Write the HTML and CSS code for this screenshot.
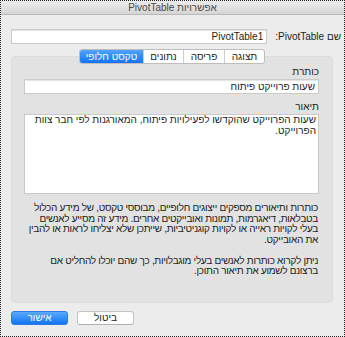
FILE: index.html
```html
<!DOCTYPE html>
<html dir="rtl" lang="he">
<head>
    <meta charset="utf-8">
    <title>אפשרויות PivotTable</title>
    <link rel="stylesheet" href="styles.css">
</head>
<body>
    <div class="window">
        <div class="titlebar">אפשרויות PivotTable</div>

        <div class="content">
            <div class="name-row">
                <label for="pivotName">שם PivotTable:</label>
                <input class="text-input" id="pivotName" value="PivotTable1">
            </div>

            <div class="tab-strip">
                <div class="tabs">
                    <div class="tab w40">תצוגה</div>
                    <div class="tab w41">פריסה</div>
                    <div class="tab w40">נתונים</div>
                    <div class="tab wide active">טקסט חלופי</div>
                </div>
            </div>

            <div class="panel">
                <div class="field-label">כותרת</div>
                <input class="text-input title-input" value="שעות פרוייקט פיתוח">

                <div class="field-label desc-label">תיאור</div>
                <textarea class="desc-box">שעות הפרוייקט שהוקדשו לפעילויות פיתוח, המאורגנות לפי חבר צוות הפרוייקט.</textarea>

                <div class="help">
                    <p>כותרות ותיאורים מספקים ייצוגים חלופיים, מבוססי טקסט, של מידע הכלול בטבלאות, דיאגרמות, תמונות ואובייקטים אחרים. מידע זה מסייע לאנשים בעלי לקויות ראייה או לקויות קוגניטיביות, שייתכן שלא יצליחו לראות או להבין את האובייקט.</p>
                    <p>ניתן לקרוא כותרות לאנשים בעלי מוגבלויות, כך שהם יוכלו להחליט אם ברצונם לשמוע את תיאור התוכן.</p>
                </div>
            </div>

            <div class="buttons">
                <button class="btn cancel">ביטול</button>
                <button class="btn primary">אישור</button>
            </div>
        </div>
    </div>
</body>
</html>
```

FILE: styles.css
```css
* {
    box-sizing: border-box;
}
body {
    margin: 0;
    font-family: "Liberation Sans", "DejaVu Sans", sans-serif;
    font-size: 10px;
    color: #1d1d1d;
}
.window {
    width: 345px;
    height: 337px;
    border: 1px dotted #222;
    background-color: #ececec;
    display: flex;
    flex-direction: column;
}
.titlebar {
    height: 14px;
    line-height: 13px;
    text-align: center;
    color: #4b4b4b;
    background: linear-gradient(#ebebeb, #d5d5d5);
    border-bottom: 1px solid #bababa;
}
.content {
    flex: 1;
    display: flex;
    flex-direction: column;
    padding: 14px 3px 0 10px;
}
.name-row {
    display: flex;
    align-items: center;
    gap: 8px;
    height: 15px;
}
.name-row label {
    white-space: nowrap;
}
.text-input {
    height: 15px;
    border: 1px solid #cacaca;
    background-color: #fff;
    font: inherit;
    color: #1d1d1d;
    padding: 0 3px;
    outline: none;
    box-shadow: inset 0 1px 0 #e4e4e4;
}
.name-row .text-input {
    flex: 1;
}
.tab-strip {
    display: flex;
    justify-content: center;
    margin: 5px 8px 0 0;
    position: relative;
    z-index: 1;
}
.tabs {
    display: flex;
    height: 15px;
    border: 1px solid #bdbdbd;
    border-radius: 3px;
    background-color: #fff;
    overflow: hidden;
}
.tab {
    line-height: 13px;
    text-align: center;
    border-left: 1px solid #cdcdcd;
}
.tab.w40 {
    width: 40px;
}
.tab.w41 {
    width: 41px;
}
.tab.wide {
    width: 63px;
    border-left: none;
}
.tab.active {
    background: linear-gradient(#4fa3fb, #1275f4);
    color: white;
}
.panel {
    margin: -8px 8px 0 0;
    height: 247px;
    padding: 9px 13px 0 12px;
    background-color: #e2e2e2;
    border: 1px solid #dcdcdc;
    border-radius: 4px;
}
.field-label {
    line-height: 12px;
}
.title-input {
    display: block;
    width: 100%;
    margin-top: 1px;
}
.desc-label {
    margin-top: 7px;
}
.desc-box {
    display: block;
    width: 100%;
    height: 80px;
    margin: 1px 0 0;
    padding: 0 2px;
    border: 1px solid #cacaca;
    background-color: #fff;
    font: inherit;
    line-height: 10.5px;
    color: #1d1d1d;
    resize: none;
    outline: none;
    overflow: hidden;
}
.help {
    margin-top: 9px;
    padding: 0 1px 0 2px;
    line-height: 10.5px;
    letter-spacing: -0.3px;
}
.help p {
    margin: 0 0 10.5px;
}
.buttons {
    display: flex;
    justify-content: flex-end;
    gap: 9px;
    margin-top: 8px;
}
.btn {
    width: 57px;
    height: 14px;
    padding: 0;
    border-radius: 3px;
    font: inherit;
    line-height: 12px;
}
.btn.cancel {
    background-color: #fff;
    border: 1px solid #c4c4c4;
    border-bottom-color: #b0b0b0;
    color: #1d1d1d;
}
.btn.primary {
    background: linear-gradient(#5aaafc, #1474f3);
    border: 1px solid #2d7ae2;
    color: white;
}
```
